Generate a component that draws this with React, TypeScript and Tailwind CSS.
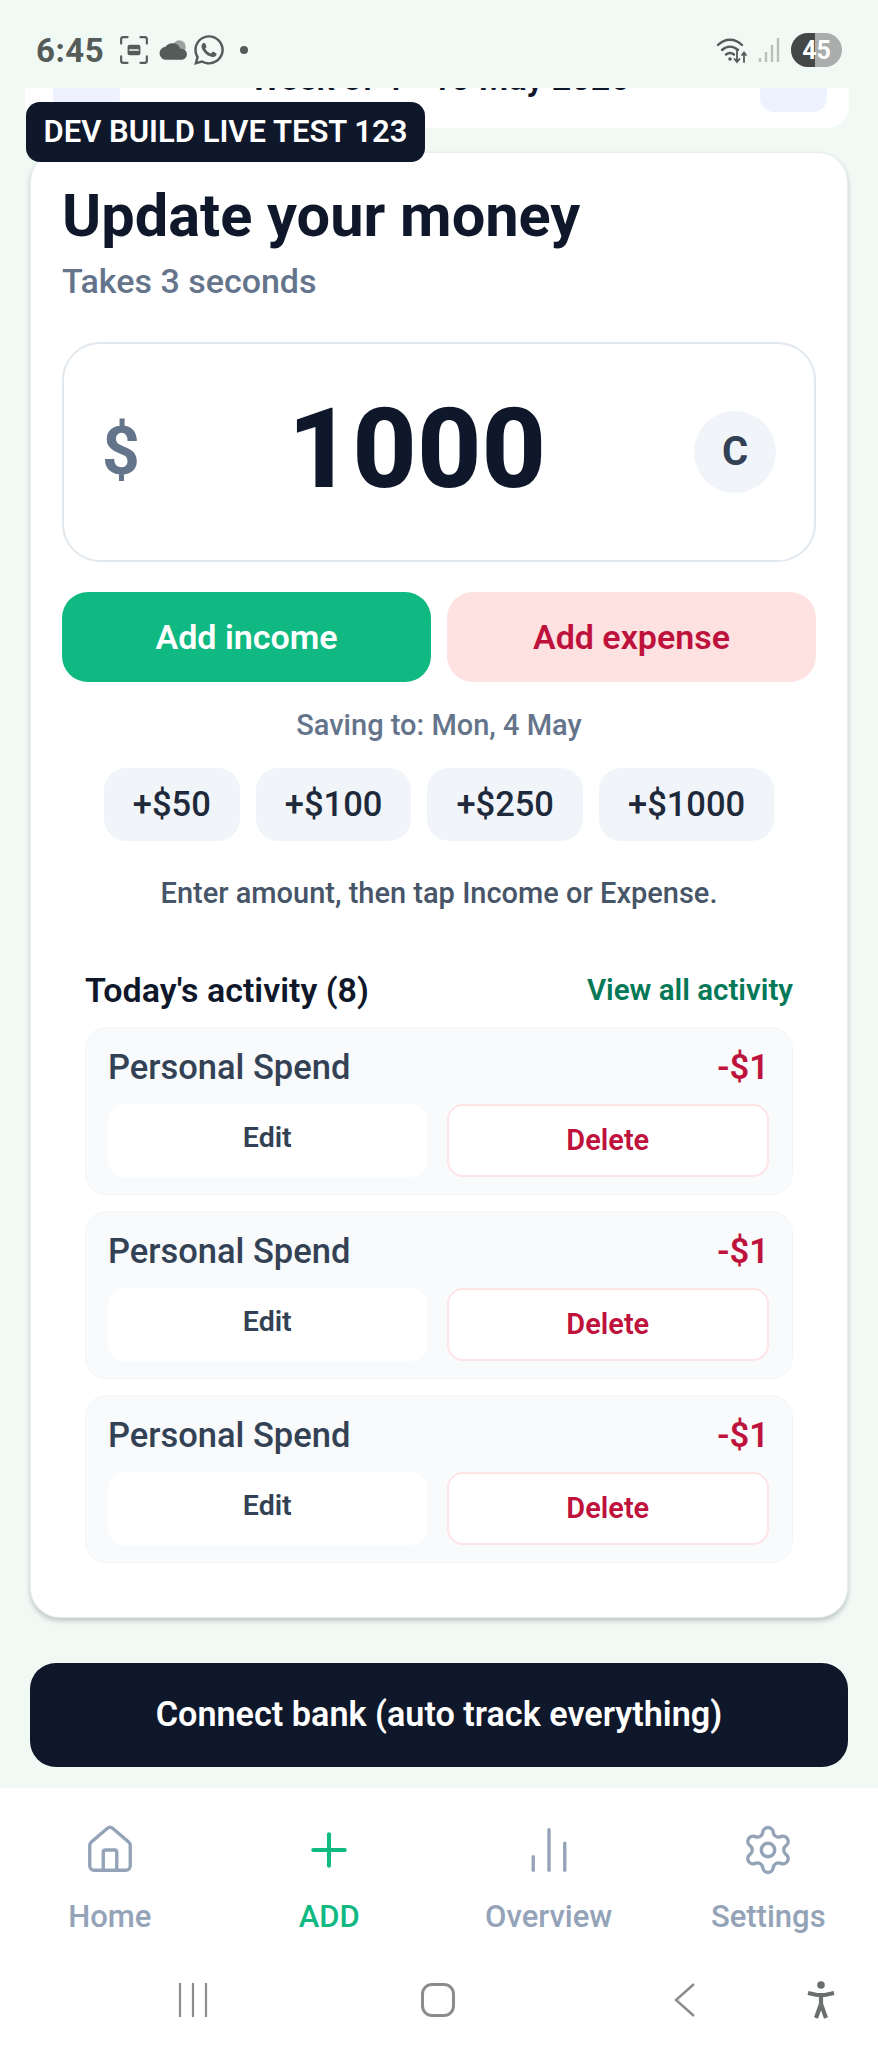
import React from 'react';
import { House, Plus, ChartNoAxesColumn, Settings } from 'lucide-react';
import { FaWhatsapp } from 'react-icons/fa';

const StatusBar = () => (
  <div className="flex h-[88px] items-center pl-[36px] pr-[36px] pt-[12px] text-[#555b58]">
    <span className="text-[33px] font-bold leading-none tracking-[0.5px]">6:45</span>
    <svg viewBox="0 0 28 28" className="ml-[15px] h-[30px] w-[30px]" fill="none" stroke="currentColor" strokeWidth="2" strokeLinecap="round">
      <path d="M2 8V4a2 2 0 0 1 2-2h4M20 2h4a2 2 0 0 1 2 2v4M26 20v4a2 2 0 0 1-2 2h-4M8 26H4a2 2 0 0 1-2-2v-4" />
      <rect x="8" y="9" width="12" height="10" rx="2" fill="currentColor" stroke="none" />
      <path d="M10 14h8" stroke="#f1f9f5" strokeWidth="1.5" />
    </svg>
    <svg viewBox="0 0 28 20" className="ml-[10px] h-[22px] w-[30px]" fill="currentColor">
      <circle cx="19" cy="7" r="6" opacity="0.55" />
      <path d="M7 19a6 6 0 0 1-1-12 8 8 0 0 1 14 2 5 5 0 0 1 2 10z" />
    </svg>
    <FaWhatsapp className="ml-[4px] h-[34px] w-[32px]" />
    <span className="ml-[15px] h-[8px] w-[8px] rounded-full bg-current" />
    <div className="ml-auto flex items-center">
      <svg viewBox="0 0 32 28" className="h-[28px] w-[32px]" fill="none" stroke="currentColor" strokeWidth="2.4" strokeLinecap="round">
        <path d="M2 9c7-7 17-7 24 0M6 14c5-4.500 11-4.500 16 0M10 18.500c2.500-2 5.500-2 8 0" />
        <circle cx="14" cy="23" r="1.800" fill="currentColor" stroke="none" />
        <path d="M21 15v11M18.500 23l2.500 3 2.500-3M28 26V17M26 19l2-2.500 2 2.500" strokeWidth="1.800" />
      </svg>
      <svg viewBox="0 0 24 28" className="ml-[9px] h-[28px] w-[24px]" fill="none" stroke="#b9bfbb" strokeWidth="2.400">
        <path d="M3 26v-4M9 26V16M15 26V9M21 26V2" />
      </svg>
      <div className="relative ml-[10px] flex h-[34px] w-[51px] items-center justify-center overflow-hidden rounded-full bg-[#a9adab]">
        <span className="absolute inset-y-0 left-0 w-[24px] bg-[#454847]" />
        <span className="relative text-[25px] font-bold leading-none text-white">45</span>
      </div>
    </div>
  </div>
);

const ActivityRow = () => (
  <div className="rounded-[22px] border border-[#f3f6f9] bg-[#f8fafc] pb-[17px] pl-[22px] pr-[23px] pt-[21px]">
    <div className="flex items-center justify-between text-[34.5px] font-medium leading-[36px]">
      <span className="text-[#334155]">Personal Spend</span>
      <span className="font-semibold text-[#be123c]">-$1</span>
    </div>
    <div className="mt-[19px] flex gap-[20px]">
      <button className="h-[73px] flex-1 rounded-[16px] bg-white pb-[5px] text-[28.5px] font-semibold text-[#334155]">Edit</button>
      <button className="h-[73px] flex-1 rounded-[16px] border-2 border-[#ffe4e6] bg-white text-[29px] font-semibold text-[#be123c]">Delete</button>
    </div>
  </div>
);

const NavItem = ({ icon, label, active }: { icon: React.ReactNode; label: string; active?: boolean }) => (
  <div className={`flex flex-col items-center ${active ? 'text-[#10b981]' : 'text-[#94a3b8]'}`}>
    {icon}
    <span className="mt-[22px] text-[31px] font-medium leading-[36px]">{label}</span>
  </div>
);

export default function App() {
  return (
    <div className="relative flex h-[2048px] w-[878px] flex-col overflow-hidden bg-[#f1f9f5] font-[Roboto,sans-serif]">
      <StatusBar />

      {/* scrolled week selector, only its lower edge shows */}
      <div className="ml-[25px] mr-[29px] h-[40px] overflow-hidden rounded-b-[22px] bg-white">
        <div className="-mt-[44px] flex items-start justify-between pl-[28px] pr-[22px]">
          <div className="flex h-[68px] w-[67px] items-center justify-center rounded-[14px] bg-[#eef2ff] pb-[20px] text-[30px] text-[#334155]">‹</div>
          <span className="mt-[12px] text-[34px] font-semibold leading-[44px] text-[#0f172a]">Week of 4 - 10 May 2026</span>
          <div className="flex h-[68px] w-[67px] items-center justify-center rounded-[14px] bg-[#eef2ff] pb-[20px] text-[30px] text-[#334155]">›</div>
        </div>
      </div>

      <div className="absolute left-[26px] top-[102px] z-10 flex h-[60px] w-[399px] items-center justify-center rounded-[14px] bg-[#0f172a] text-[31px] font-semibold text-white">
        DEV BUILD LIVE TEST 123
      </div>

      {/* main card */}
      <div className="mx-[30px] mt-[24px] rounded-[30px] border border-[#e7efeb] bg-white px-[31px] pb-[54px] pt-[33px] shadow-[0_3px_5px_rgba(15,23,42,0.22)]">
        <h1 className="text-[59.5px] font-bold leading-[60px] text-[#0f172a]">Update your money</h1>
        <p className="mt-[17px] text-[34px] font-medium leading-[36px] text-[#64748b]">Takes 3 seconds</p>

        <div className="mt-[43px] flex h-[220px] items-center rounded-[38px] border-2 border-[#e2e8f0] pl-[38px] pr-[38px]">
          <span className="text-[66px] font-bold leading-none text-[#64748b]">$</span>
          <span className="flex-1 pb-[6px] text-center text-[112px] font-extrabold leading-none text-[#0f172a]">1000</span>
          <span className="flex h-[82px] w-[82px] items-center justify-center rounded-full bg-[#f1f5f9] text-[40px] font-bold text-[#334155]">C</span>
        </div>

        <div className="mt-[30px] flex gap-[16px]">
          <button className="h-[90px] flex-1 rounded-[26px] bg-[#10b981] text-[34px] font-semibold text-white">Add income</button>
          <button className="h-[90px] flex-1 rounded-[26px] bg-[#fee2e2] text-[34px] font-semibold text-[#be123c]">Add expense</button>
        </div>

        <p className="mt-[28px] text-center text-[29px] font-medium leading-[30px] text-[#64748b]">Saving to: Mon, 4 May</p>

        <div className="mt-[28px] flex justify-center gap-[16px]">
          {['+$50', '+$100', '+$250', '+$1000'].map((amount) => (
            <button key={amount} className="h-[73px] rounded-[22px] bg-[#f1f5f9] px-[29px] text-[34.5px] font-medium text-[#1e293b]">{amount}</button>
          ))}
        </div>

        <p className="mt-[37px] text-center text-[29px] font-medium leading-[30px] text-[#475569]">Enter amount, then tap Income or Expense.</p>

        <div className="mx-[23px] mt-[64px]">
          <div className="flex items-center justify-between leading-[36px]">
            <span className="text-[34px] font-semibold text-[#0f172a]">Today's activity (8)</span>
            <span className="text-[29.5px] font-semibold text-[#047857]">View all activity</span>
          </div>
          <div className="mt-[19px] flex flex-col gap-[16px]">
            <ActivityRow />
            <ActivityRow />
            <ActivityRow />
          </div>
        </div>
      </div>

      <button className="mx-[30px] mt-[45px] h-[104px] rounded-[26px] bg-[#0f172a] text-[34.2px] font-semibold text-white">
        Connect bank (auto track everything)
      </button>

      <div className="mt-[21px] flex-1 bg-white">
        <div className="grid grid-cols-4 pt-[35px]">
          <NavItem label="Home" icon={<House size={54} strokeWidth={1.5} />} />
          <NavItem label="ADD" active icon={<Plus size={54} strokeWidth={1.8} />} />
          <NavItem label="Overview" icon={<ChartNoAxesColumn size={54} strokeWidth={1.5} />} />
          <NavItem label="Settings" icon={<Settings size={54} strokeWidth={1.5} />} />
        </div>
        <div className="mt-[47px] flex h-[36px] items-center pl-[178px] text-[#8a8d8c]">
          <svg viewBox="0 0 30 34" className="h-[34px] w-[30px]" fill="none" stroke="currentColor" strokeWidth="2.200">
            <path d="M2 0v34M15 0v34M28 0v34" />
          </svg>
          <div className="ml-[213px] h-[34px] w-[34px] rounded-[11px] border-[3px] border-current" />
          <svg viewBox="0 0 21 34" className="ml-[219px] h-[34px] w-[21px]" fill="none" stroke="currentColor" strokeWidth="2.400">
            <path d="M20 1L2 17l18 16" />
          </svg>
          <svg viewBox="0 0 32 38" className="ml-[110px] h-[38px] w-[32px]" fill="none" stroke="#6b6f6e" strokeWidth="4.200">
            <circle cx="16" cy="4" r="3.800" fill="#6b6f6e" stroke="none" />
            <path d="M3 12l9 2h8l9-2M16 14v10M11 37l5-14 5 14" />
          </svg>
        </div>
      </div>
    </div>
  );
}
